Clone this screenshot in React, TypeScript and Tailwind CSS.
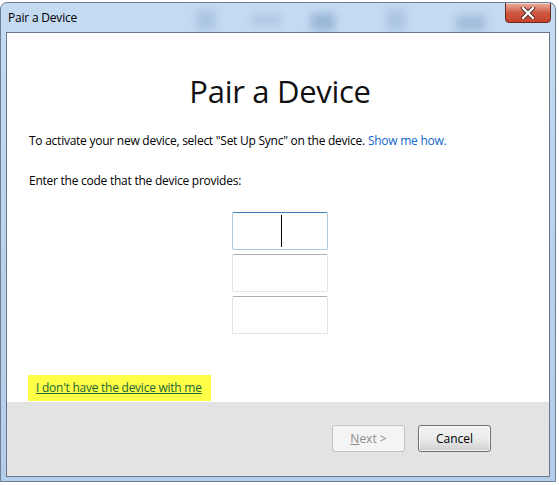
import React from 'react';

const font = { fontFamily: '"Segoe UI", "Open Sans", "Noto Sans", sans-serif' };

const CloseButton: React.FC = () => (
  <div className="absolute right-[4px] top-[-1px] w-[46px] h-[21px] rounded-b-[4px] border border-[#6b2a1f] bg-gradient-to-b from-[#eab0a2] via-[#cf5a44] to-[#c4412b] flex items-center justify-center shadow-[inset_0_1px_0_rgba(255,255,255,0.5)]">
    <svg width="16" height="12" viewBox="0 0 16 12">
      <path d="M3 1 L13 11 M13 1 L3 11" stroke="#4a2b25" strokeWidth="4.2" strokeLinecap="round" />
      <path d="M3 1 L13 11 M13 1 L3 11" stroke="#ffffff" strokeWidth="2.4" strokeLinecap="round" />
    </svg>
  </div>
);

const CodeBox: React.FC<{ focused?: boolean }> = ({ focused }) => (
  <div
    className={
      focused
        ? 'relative w-[96px] h-[38px] rounded-[2px] border border-[#a9cbe7] border-t-[#3d7cb5] bg-white'
        : 'w-[96px] h-[38px] rounded-[2px] border border-[#e2e3ea] border-t-[#abadb3] bg-white'
    }
  >
    {focused && <div className="absolute left-[48px] top-[2px] w-[1px] h-[32px] bg-black" />}
  </div>
);

export default function App() {
  return (
    <div className="w-[559px] h-[485px] bg-white overflow-hidden" style={font}>
      <div className="mt-[2px] w-[556px] h-[480px] rounded-t-[7px] border border-[#6d7f93] bg-gradient-to-b from-[#c5dbf2] via-[#b9d3ef] to-[#b3cdea] flex flex-col">
        <div className="relative h-[29px] shrink-0 overflow-hidden">
          <div className="absolute left-[195px] top-[6px] w-[20px] h-[22px] bg-[#9cb8d8] blur-[4px] opacity-60" />
          <div className="absolute left-[250px] top-[12px] w-[30px] h-[10px] bg-[#9cb8d8] blur-[4px] opacity-60" />
          <div className="absolute left-[310px] top-[10px] w-[24px] h-[18px] bg-[#7d9fc6] blur-[4px] opacity-60" />
          <div className="absolute left-[385px] top-[6px] w-[20px] h-[22px] bg-[#9cb8d8] blur-[4px] opacity-60" />
          <div className="absolute left-[455px] top-[12px] w-[30px] h-[16px] bg-[#8aa8cc] blur-[4px] opacity-60" />
          <div className="relative pl-[7px] pt-[7px] text-[12px] leading-[16px] text-black tracking-[-0.2px]">Pair a Device</div>
          <CloseButton />
        </div>
        <div className="mx-[5px] h-[445px] border border-[#6a7788] flex flex-col">
          <div className="bg-white h-[369px] flex flex-col text-[12px] text-black tracking-[-0.25px]">
            <div className="mt-[36px] h-[44px] text-center text-[31px] leading-[44px] text-[#111] tracking-[-0.3px] pl-[4px]">Pair a Device</div>
            <div className="mt-[20px] pl-[22px] leading-[16px]">
              To activate your new device, select "Set Up Sync" on the device.{' '}
              <span className="text-[#0f66cc]">Show me how.</span>
            </div>
            <div className="mt-[24px] pl-[22px] leading-[16px]">Enter the code that the device provides:</div>
            <div className="mt-[23px] flex flex-col items-center gap-[4px] pl-[4px]">
              <CodeBox focused />
              <CodeBox />
              <CodeBox />
            </div>
            <div className="mt-[41px] ml-[21px] w-[183px] h-[26px] bg-[#ffff45] flex items-center pl-[8px]">
              <span className="underline text-[#20663a] leading-[16px]">I don't have the device with me</span>
            </div>
          </div>
          <div className="flex-1 bg-[#e3e3e3] flex justify-end items-start pt-[23px] pr-[58px] gap-[13px] text-[12px]">
            <div className="w-[73px] h-[27px] rounded-[3px] border border-[#c1c1c1] bg-[#f4f4f4] flex items-center justify-center text-[#8d8d8d]">
              <span><span className="underline">N</span>ext &gt;</span>
            </div>
            <div className="w-[73px] h-[27px] rounded-[3px] border border-[#707070] bg-gradient-to-b from-[#f2f2f2] via-[#ebebeb] to-[#cfcfcf] flex items-center justify-center text-black shadow-[inset_0_0_0_1px_rgba(255,255,255,0.7)]">
              Cancel
            </div>
          </div>
        </div>
      </div>
    </div>
  );
}
